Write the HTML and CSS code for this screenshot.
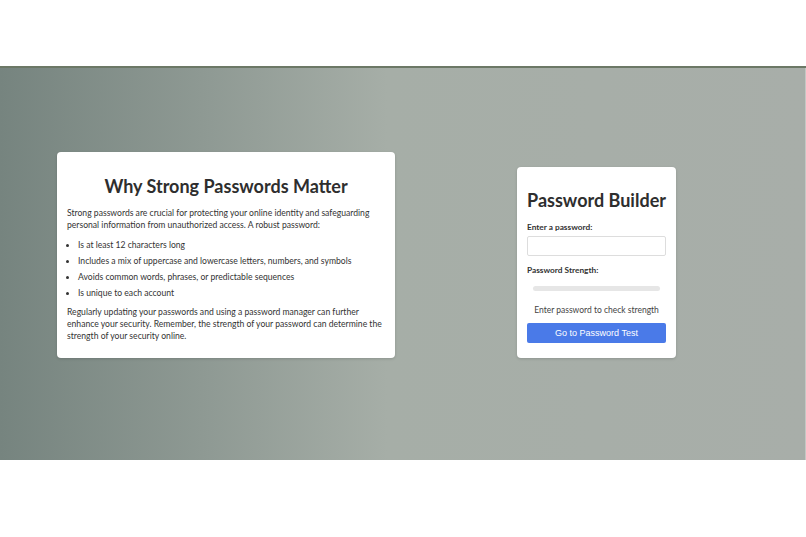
FILE: index.html
```html
<!DOCTYPE html>
<html>
<head>
<meta charset="utf-8">
<link rel="stylesheet" href="styles.css">
</head>
<body>
<div class="top"></div>
<main class="band">
  <section class="info">
    <h1>Why Strong Passwords Matter</h1>
    <p>Strong passwords are crucial for protecting your online identity and safeguarding personal information from unauthorized access. A robust password:</p>
    <ul>
      <li>Is at least 12 characters long</li>
      <li>Includes a mix of uppercase and lowercase letters, numbers, and symbols</li>
      <li>Avoids common words, phrases, or predictable sequences</li>
      <li>Is unique to each account</li>
    </ul>
    <p>Regularly updating your passwords and using a password manager can further enhance your security. Remember, the strength of your password can determine the strength of your security online.</p>
  </section>
  <section class="builder">
    <h2>Password Builder</h2>
    <label class="lbl">Enter a password:</label>
    <div class="input"></div>
    <div class="lbl">Password Strength:</div>
    <div class="bar"></div>
    <div class="hint">Enter password to check strength</div>
    <div class="btn">Go to Password Test</div>
  </section>
</main>
<div class="bottom"></div>
</body>
</html>
```
FILE: styles.css
```css
html, body { margin: 0; padding: 0; background: #fff; }
body { width: 806px; height: 537px; overflow: hidden; font-family: Lato, "Open Sans", sans-serif; color: #333; }
.top { height: 66px; }
.band {
  border-top: 2px solid #6c7866;
  background: linear-gradient(to right, #76847f 0%, #8e9993 25%, #a6aea7 48%, #a8aea9 100%);
  box-shadow: inset -1px 0 0 #c4c8c4;
  display: flex;
  align-items: flex-end;
  padding: 0 0 102px 57px;
  box-sizing: border-box;
  height: 394px;
}
.info {
  width: 338px;
  height: 206px;
  flex-shrink: 0;
  box-sizing: border-box;
  background: #fff;
  border-radius: 4px;
  padding: 23px 10px 0 10px;
  box-shadow: 0 1px 3px rgba(0,0,0,0.15);
}
.info h1 {
  margin: 0 0 10px 0;
  text-align: center;
  font-size: 18px;
  font-weight: 700;
  line-height: 22px;
  color: #2e2e2e;
}
.info p {
  margin: 0;
  font-size: 8.6px;
  line-height: 12px;
  color: #333;
}
.info ul {
  margin: 6px 0 5px 0;
  padding: 0 0 0 11px;
  font-size: 8.6px;
  line-height: 16px;
}
.builder {
  margin-left: 122px;
  width: 159px;
  height: 191px;
  flex-shrink: 0;
  box-sizing: border-box;
  background: #fff;
  border-radius: 4px;
  padding: 22px 10px 0 10px;
  display: flex;
  flex-direction: column;
  box-shadow: 0 1px 3px rgba(0,0,0,0.15);
}
.builder > * { flex-shrink: 0; }
.builder h2 {
  margin: 0 0 11px 0;
  text-align: center;
  font-size: 18px;
  line-height: 22px;
  font-weight: 700;
  color: #2e2e2e;
  white-space: nowrap;
}
.lbl {
  font-size: 8.3px;
  font-weight: 700;
  line-height: 11px;
  color: #333;
  display: block;
}
.input {
  margin: 3px 0 9px 0;
  height: 20px;
  border: 1px solid #ddd;
  border-radius: 2px;
  box-sizing: border-box;
}
.bar {
  margin: 10px 6px 0 6px;
  height: 5px;
  border-radius: 3px;
  background: #e6e6e6;
}
.hint {
  margin-top: 13px;
  text-align: center;
  font-size: 8.5px;
  line-height: 12px;
  color: #444;
}
.btn {
  margin-top: 7px;
  height: 20px;
  border-radius: 2px;
  background: #4a7ae8;
  color: #fff;
  text-align: center;
  font-family: "Liberation Sans", Arial, sans-serif;
  font-size: 9px;
  line-height: 20px;
}
```
